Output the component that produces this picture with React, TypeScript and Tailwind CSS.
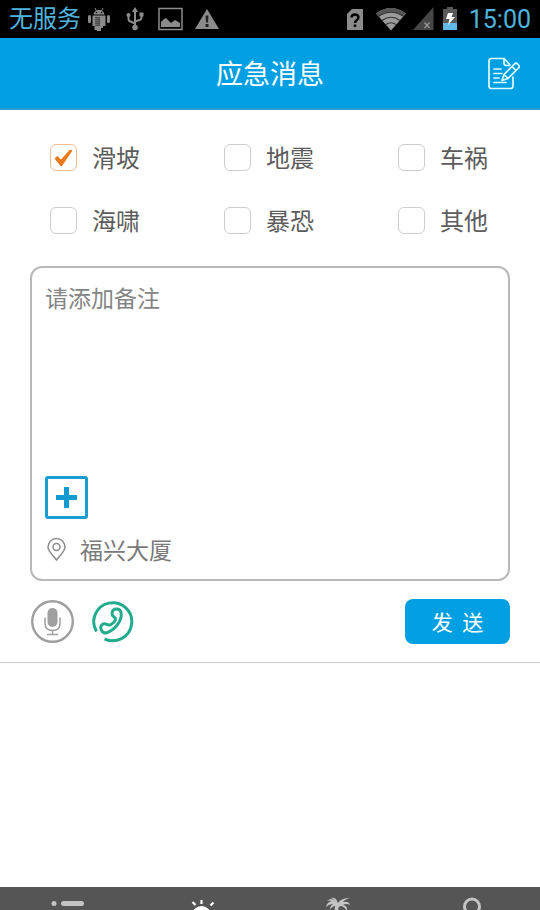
import { useState } from "react";

const EMERGENCY_TYPES = ["滑坡", "地震", "车祸", "海啸", "暴恐", "其他"];

function StatusBar() {
    return (
        <div className="flex h-[38px] shrink-0 items-center justify-between bg-black pl-[9px] pr-[9px] text-[#4fb4dd]">
            <div className="flex items-center">
                <span className="pb-1 text-[24px] leading-[34px]">无服务</span>
                <svg className="ml-[7px] h-6 w-[22px]" viewBox="0 0 22 24" fill="#8b8b8b">
                    <path d="M5.500 7.500C6 4.500 8 3 11 3s5 1.500 5.500 4.500z" />
                    <path d="M7 1l1.500 3M15 1l-1.500 3" stroke="#8b8b8b" />
                    <rect x="0" y="8" width="3" height="8" rx="1.500" />
                    <rect x="19" y="8" width="3" height="8" rx="1.500" />
                    <path d="M4.500 8.500h13V19H15v2h-2v3H9v-1H6.500v-4h-2z" />
                    <path d="M7 10h5v9H7z" fill="#4a4a4a" />
                    <path d="M8 11v7M10 11v7" stroke="#8b8b8b" strokeDasharray="1 1" />
                    <circle cx="8.500" cy="5.500" r=".8" fill="#000" />
                    <circle cx="13.500" cy="5.500" r=".8" fill="#000" />
                </svg>
                <svg className="ml-4 h-6 w-[18px]" viewBox="0 0 18 24" fill="none" stroke="#8b8b8b" strokeWidth="2">
                    <path d="M9 20V3M2.500 8.500v3.500q0 2 2 2.500L9 16.500M15.500 7v3.500q0 2-2 2.500L9 14.500" />
                    <path d="M9 0l3 5H6z" fill="#8b8b8b" stroke="none" />
                    <circle cx="2.500" cy="8" r="2" fill="#8b8b8b" stroke="none" />
                    <path d="M13.500 5.500h4v4h-4z" fill="#8b8b8b" stroke="none" />
                    <circle cx="9" cy="20.500" r="2.800" fill="#8b8b8b" stroke="none" />
                </svg>
                <svg className="ml-[14px] h-6 w-[25px]" viewBox="0 0 25 24">
                    <rect x="1" y="1.500" width="23" height="21" fill="none" stroke="#8b8b8b" strokeWidth="1.500" />
                    <path d="M3 20v-5l3-3 2-1 3 3 2 2 4-3 5 3v4z" fill="#8b8b8b" />
                </svg>
                <svg className="ml-3 h-6 w-6" viewBox="0 0 24 24">
                    <path d="M12 2l12 20H0z" fill="#8b8b8b" />
                    <path d="M10.500 8.500h3l-.5 7h-2zM10.500 17h3v3h-3z" fill="#222" />
                </svg>
            </div>
            <div className="flex items-center">
                <svg className="h-6 w-4" viewBox="0 0 16 24">
                    <path d="M5 2h11v21H0V7z" fill="#8b8b8b" />
                    <path
                        d="M4.500 10.500q.3-3 3.500-3t3.500 2.800q0 1.700-1.800 2.900T8 16M8 17.500V20"
                        fill="none"
                        stroke="#000"
                        strokeWidth="2.500"
                    />
                </svg>
                <svg className="ml-[13px] h-6 w-[30px]" viewBox="0 0 30 24">
                    <path d="M0 6.500Q15-4.500 30 6.500L15 23.500z" fill="#9a9a9a" />
                    <path d="M0 6.500Q15-4.500 30 6.500l-2.700 3Q15 1 2.700 9.500z" fill="#555" />
                    <path
                        d="M2.500 9.500Q15 1 27.500 9.500M6 13.500q9-6.500 18 0M10 17.500q5-3.500 10 0"
                        fill="none"
                        stroke="#333"
                        strokeWidth="1.200"
                    />
                </svg>
                <svg className="ml-[7px] h-6 w-[21px]" viewBox="0 0 21 24">
                    <path d="M20.500 0v23H0z" fill="#464646" />
                    <path d="M11.500 15.500l5 5.500M16.500 15.500l-5 5.500" stroke="#999" strokeWidth="1.200" />
                </svg>
                <svg className="ml-[9px] h-6 w-[14px]" viewBox="0 0 14 24">
                    <path d="M4 0h6v2h4v15H0V2h4z" fill="#595959" />
                    <path d="M0 16h14v7H0z" fill="#62b9e5" />
                    <path d="M5 6h5l-1.500 4H12l-7 8 1.500-6H3z" fill="#fff" />
                </svg>
                <span className="ml-3 pt-[2px] font-['Roboto'] text-[25px] leading-9">15:00</span>
            </div>
        </div>
    );
}

function Header() {
    return (
        <header className="grid h-[72px] shrink-0 grid-cols-[1fr_auto_1fr] items-center border-b-2 border-[#2b9ccb] bg-[#029fe2] px-5 text-white">
            <h1 className="col-start-2 text-[27px] leading-10">应急消息</h1>
            <button type="button" aria-label="编辑" className="justify-self-end">
                <svg
                    className="h-[34px] w-[34px]"
                    viewBox="0 0 34 34"
                    fill="none"
                    stroke="#e0fbff"
                    strokeWidth="1.700"
                    strokeLinejoin="round"
                    strokeLinecap="round"
                >
                    <path d="M27 21v9q0 2.500-2.500 2.500h-19Q3 32.500 3 30V5q0-2.500 2.500-2.500H18l6 6.500" />
                    <path d="M18 2.500V7q0 2.500 2.500 2.500H23" />
                    <path d="M8 13h7M8 17.500h8M8 22h5M8 26.500h12" />
                    <path d="M16 24.500l2-6L28.500 8q1.500-1.500 3 0l1 1q1.500 1.500 0 3L22 22.500zM18 18.500l4 4M26 10.500l4 4" />
                </svg>
            </button>
        </header>
    );
}

function TypeCheckbox({ label, checked, onChange }: { label: string; checked: boolean; onChange: () => void }) {
    return (
        <label className="flex items-center gap-[15px] text-[24px] leading-9 text-[#5c5c5c]">
            <span className="relative flex">
                <input
                    type="checkbox"
                    checked={checked}
                    onChange={onChange}
                    className="h-[27px] w-[27px] appearance-none rounded-md border border-[#cdcdcd] bg-white checked:border-[#f3bd93]"
                />
                {checked && (
                    <svg className="pointer-events-none absolute inset-0 h-[27px] w-[27px]" viewBox="0 0 27 27">
                        <path d="M4.500 14.500l3-2.500 3.500 3.500L20 5.500l2.500 1L12 22h-1.500z" fill="#e8791c" />
                    </svg>
                )}
            </span>
            {label}
        </label>
    );
}

function TabBar() {
    return (
        <nav className="grid h-[23px] shrink-0 grid-cols-4 items-start justify-items-center overflow-hidden bg-[#555555]">
            <a href="#list" aria-label="列表">
                <svg className="h-12 w-9" viewBox="0 0 36 48" fill="#c4c4c4">
                    <circle cx="4" cy="16.500" r="2.500" />
                    <rect x="11" y="14" width="23" height="5" rx="2.500" />
                    <circle cx="4" cy="28" r="2.500" />
                    <rect x="11" y="25.500" width="23" height="5" rx="2.500" />
                </svg>
            </a>
            <a href="#alert" aria-label="应急">
                <svg className="h-12 w-9" viewBox="0 0 36 48" fill="#fff">
                    <circle cx="16.500" cy="28.500" r="9.500" />
                    <path d="M16.500 13v4M7.500 15l3 3M28.500 15.500l-3 3" stroke="#fff" strokeWidth="2.200" />
                </svg>
            </a>
            <a href="#travel" aria-label="旅行">
                <svg className="h-12 w-9" viewBox="0 0 36 48" fill="#c4c4c4">
                    <path d="M18 16q3-5 12-5-5 1-7 4 6-1 7 3-4-2-7 0 5 1 4 6-3-5-7-5-2 1-2 5h-3q-1-4 1-5-4 0-6 4 0-4 3-6-4 0-7 3 1-5 6-6-3-1-5 0 4-4 8 0-1-2-4-3 5-1 7 5z" />
                    <path d="M17 18q4 12 2 26h-4q3-14 0-26z" />
                </svg>
            </a>
            <a href="#me" aria-label="我的">
                <svg className="h-12 w-9" viewBox="0 0 36 48" fill="none" stroke="#c4c4c4" strokeWidth="3">
                    <circle cx="17" cy="19.500" r="7.500" />
                    <path d="M4 42q0-13 13-13t13 13" />
                </svg>
            </a>
        </nav>
    );
}

export default function App() {
    const [selected, setSelected] = useState<string[]>(["滑坡"]);
    const [note, setNote] = useState("");

    const toggleType = (type: string) => {
        setSelected((prev) => (prev.includes(type) ? prev.filter((t) => t !== type) : [...prev, type]));
    };

    return (
        <div className="flex h-screen flex-col overflow-hidden bg-white font-['Noto_Sans_CJK_SC',sans-serif]">
            <StatusBar />
            <Header />

            <main className="min-h-0 flex-1">
                <form className="border-b border-[#cccccc] pb-[18px]" onSubmit={(e) => e.preventDefault()}>
                    <div className="grid grid-cols-[auto_auto_auto] justify-between gap-y-[27px] pb-7 pl-[50px] pr-[52px] pt-[29px]">
                        {EMERGENCY_TYPES.map((type) => (
                            <TypeCheckbox
                                key={type}
                                label={type}
                                checked={selected.includes(type)}
                                onChange={() => toggleType(type)}
                            />
                        ))}
                    </div>

                    <div className="mx-[30px] flex flex-col items-start rounded-xl border-2 border-[#b9b9b9] px-[13px] pb-3 pt-[11px] text-[#7a7a7a]">
                        <textarea
                            aria-label="备注"
                            placeholder="请添加备注"
                            value={note}
                            onChange={(e) => setNote(e.target.value)}
                            className="h-[197px] w-full resize-none text-[23px] leading-9 outline-none placeholder:text-[#858585]"
                        />
                        <button
                            type="button"
                            aria-label="添加图片"
                            className="flex h-[43px] w-[43px] items-center justify-center rounded-[3px] border-3 border-[#1a9ed0]"
                        >
                            <svg className="h-[21px] w-[21px]" viewBox="0 0 21 21" fill="#1499d0">
                                <path d="M8 0h5v8h8v5h-8v8H8v-8H0V8h8z" />
                            </svg>
                        </button>
                        <div className="mt-3 flex items-center text-[23px] leading-9">
                            <svg
                                className="mr-[14px] h-6 w-[21px]"
                                viewBox="0 0 21 24"
                                fill="none"
                                stroke="#8c8c8c"
                                strokeWidth="1.500"
                            >
                                <path d="M11.500 23C8.500 18.500 3 14.500 3 10a8.500 8.500 0 0 1 17 0C20 14.500 14.500 18.500 11.500 23z" />
                                <circle cx="11.500" cy="10" r="3.500" />
                            </svg>
                            福兴大厦
                        </div>
                    </div>

                    <div className="mt-[18px] flex items-start px-[30px]">
                        <button type="button" aria-label="语音">
                            <svg className="h-11 w-11" viewBox="0 0 44 44" fill="none" stroke="#9f9f9f">
                                <circle cx="22.500" cy="22.500" r="20.300" strokeWidth="2.400" />
                                <rect x="17.500" y="9" width="10" height="19" rx="5" fill="#9f9f9f" stroke="none" />
                                <path d="M15 18.500v6q0 7 7.500 7t7.500-7v-6M22.500 31.500v4M17 35.500h11" strokeWidth="1.500" />
                            </svg>
                        </button>
                        <button type="button" aria-label="电话" className="ml-4">
                            <svg
                                className="h-11 w-11"
                                viewBox="0 0 44 44"
                                fill="none"
                                stroke="#22ab8c"
                                strokeWidth="3"
                                strokeLinejoin="round"
                            >
                                <path d="M6.500 32.500A19 19 0 1 1 14.500 39.800" />
                                <path d="M22 14.500C22.500 8.500 30.500 8.500 31.200 14.500C32 21 26 30 17.500 33.500C11.500 35.500 8.500 28 13 25C16.500 23.500 17.500 27.500 21 25.500C25.500 23 27 19.500 23.500 17.500Q22 16.500 22 14.500z" />
                            </svg>
                        </button>
                        <button
                            type="submit"
                            className="ml-auto h-[45px] w-[105px] whitespace-pre rounded-lg bg-[#029fe2] text-[21px] text-white"
                        >
                            发{"  "}送
                        </button>
                    </div>
                </form>
            </main>

            <TabBar />
        </div>
    );
}
